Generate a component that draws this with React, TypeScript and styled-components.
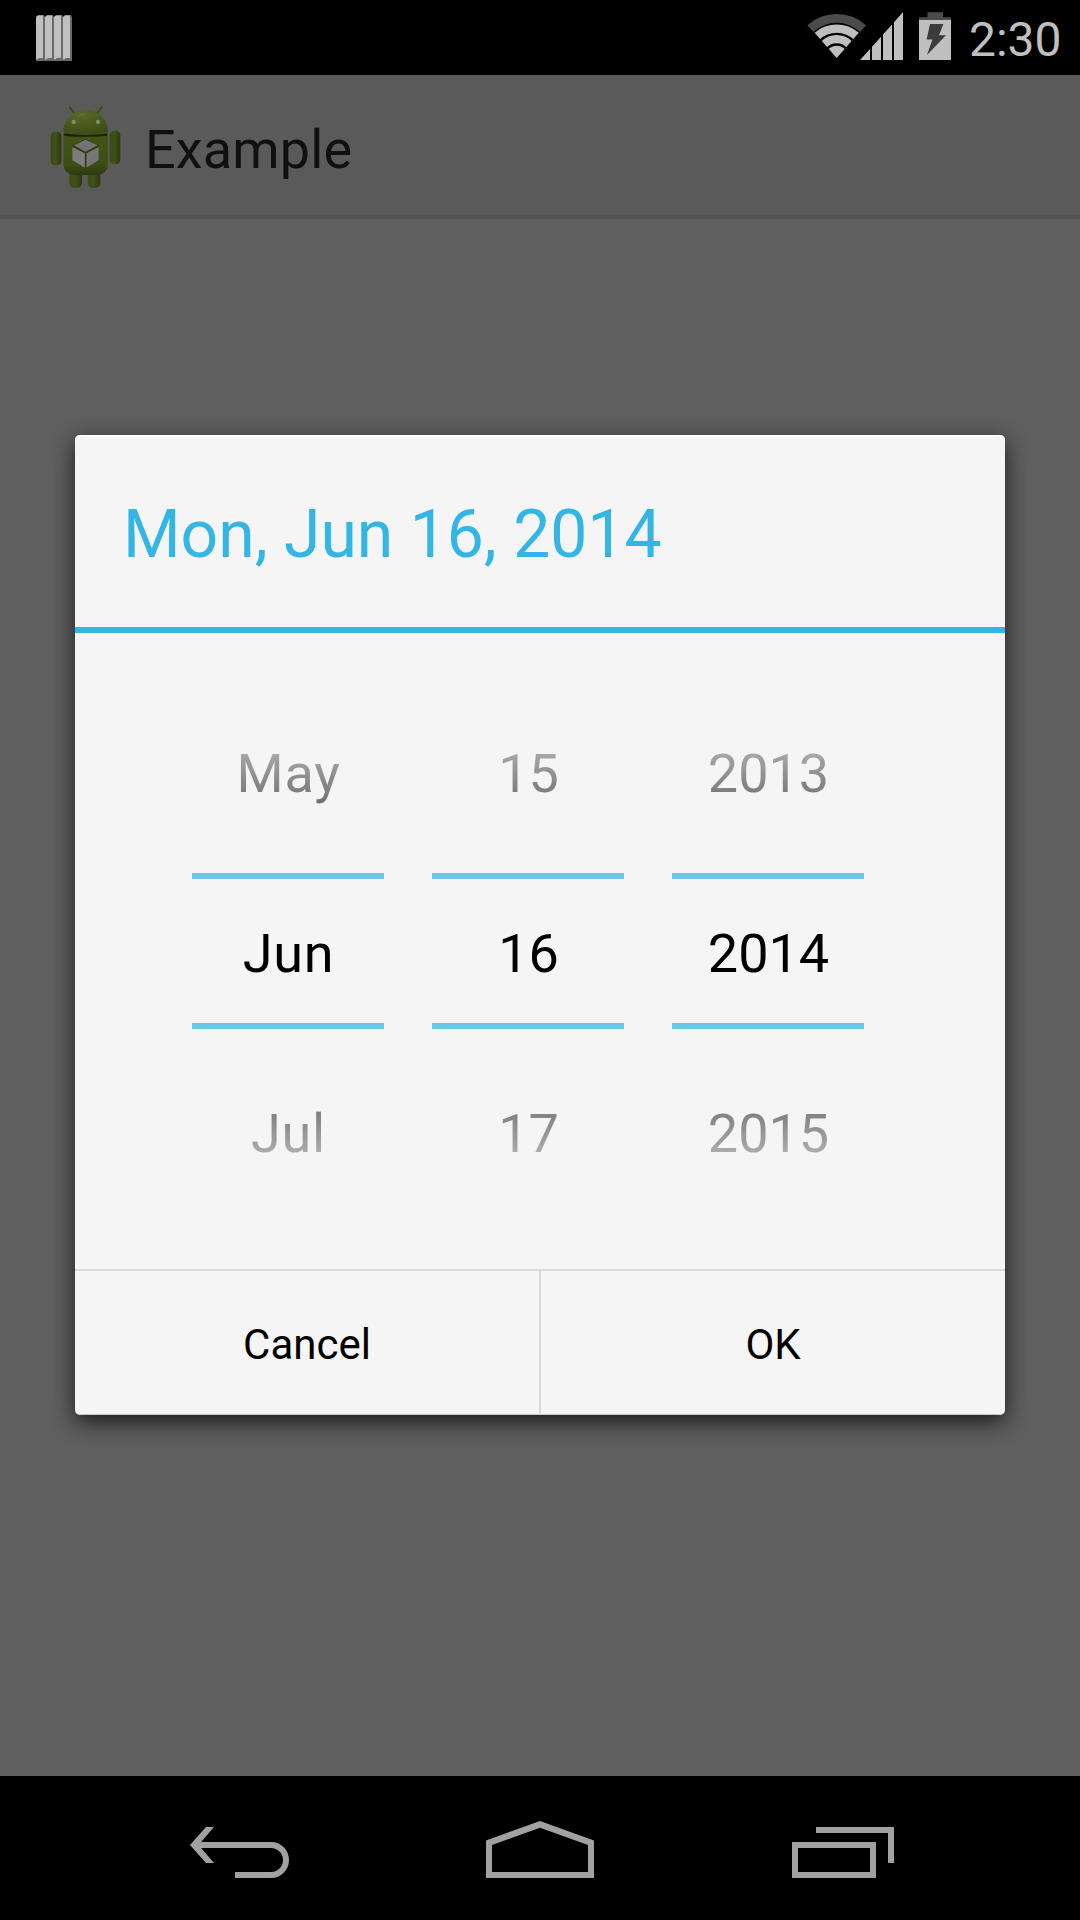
import React from "react";
import styled, { createGlobalStyle } from "styled-components";

const GlobalStyle = createGlobalStyle`
  html, body { margin: 0; padding: 0; background: #000; }
  * { box-sizing: border-box; }
`;

const Screen = styled.div`
  width: 1080px;
  height: 1920px;
  display: flex;
  flex-direction: column;
  overflow: hidden;
  background: #5f5f5f;
  font-family: Roboto, "Noto Sans", sans-serif;
  font-weight: 400;
`;

const StatusBar = styled.header`
  height: 75px;
  flex: none;
  display: flex;
  justify-content: space-between;
  align-items: flex-start;
  padding: 0 19px 0 36px;
  background: #000;
`;

const NotificationIcon = styled.svg`
  width: 36px;
  height: 46px;
  margin-top: 15px;
`;

const StatusIcons = styled.div`
  display: flex;
  align-items: flex-start;
`;

const StatusGlyph = styled.svg<{ $width: number; $gap?: number }>`
  width: ${(p) => p.$width}px;
  height: 75px;
  margin-right: ${(p) => p.$gap ?? 0}px;
  flex: none;
`;

const Clock = styled.span`
  width: 92px;
  color: #bfbfbf;
  font-size: 48px;
  line-height: 56px;
  padding-top: 12px;
  white-space: nowrap;
`;

const ActionBar = styled.div`
  height: 144px;
  flex: none;
  display: flex;
  align-items: flex-start;
  padding: 20px 0 0 40px;
  background: #5a5a5a;
  border-bottom: 4px solid #555;
`;

const AppIcon = styled.svg`
  width: 100px;
  height: 100px;
  flex: none;
`;

const AppTitle = styled.h1`
  margin: 23px 0 0 5px;
  color: #101010;
  font-size: 54px;
  font-weight: 400;
  line-height: 64px;
  letter-spacing: 0.15px;
`;

const Content = styled.main`
  flex: 1;
  display: flex;
  justify-content: center;
  align-items: flex-start;
  padding-top: 216px;
`;

const Dialog = styled.section`
  width: 930px;
  height: 980px;
  display: flex;
  flex-direction: column;
  background: #f5f5f5;
  border-radius: 5px;
  box-shadow:
    inset 0 2px 0 #fff,
    inset 0 -1px 0 #c4c8c8,
    0 7px 22px rgba(0, 0, 0, 0.72);
`;

const DialogHeader = styled.div`
  height: 198px;
  flex: none;
  padding: 62px 48px 0;
  border-bottom: 6px solid #33b5e5;
`;

const DialogTitle = styled.h2`
  margin: 0;
  color: #33b5e5;
  font-size: 66px;
  font-weight: 400;
  line-height: 76px;
  white-space: nowrap;
`;

const Pickers = styled.div`
  height: 636px;
  flex: none;
  display: flex;
  gap: 48px;
  padding: 48px 0 48px 117px;
`;

const Picker = styled.div`
  position: relative;
  width: 192px;
  height: 540px;
`;

const PickerValues = styled.div<{ $tracking: number }>`
  height: 540px;
  display: flex;
  flex-direction: column;
  letter-spacing: ${(p) => p.$tracking}px;
  mask-image: linear-gradient(to bottom, transparent 0, #000 228px, #000 312px, transparent 540px);
`;

const PickerValue = styled.div`
  height: 180px;
  padding-top: 5px;
  padding-left: 1px;
  color: #000;
  font-size: 54px;
  line-height: 176px;
  text-align: center;
`;

const SelectionFrame = styled.div`
  position: absolute;
  inset: 192px 0;
  border: solid #6bc6e9;
  border-width: 6px 0;
`;

const ButtonBar = styled.div`
  flex: 1;
  display: flex;
  border-top: 2px solid #dadada;
`;

const DialogButton = styled.button`
  flex: 1 1 0;
  margin: 0;
  padding: 3px 0 0;
  border: 0;
  background: transparent;
  color: #000;
  font: 400 42px Roboto, "Noto Sans", sans-serif;

  & + & {
    border-left: 2px solid #dadada;
    flex-basis: 2px;
  }
`;

const NavBar = styled.nav`
  height: 144px;
  flex: none;
  display: flex;
  justify-content: center;
  gap: 156px;
  background: #000;
`;

const NavIcon = styled.svg`
  width: 144px;
  height: 144px;
`;

const columns = [
  { values: ["May", "Jun", "Jul"], tracking: 0.7 },
  { values: ["15", "16", "17"], tracking: 0 },
  { values: ["2013", "2014", "2015"], tracking: 0 },
];

function BarsIcon() {
  return (
    <NotificationIcon viewBox="0 0 36 46">
      {[0, 9, 18, 27].map((x) => (
        <g key={x} transform={`translate(${x} 0)`}>
          <path d="M0 2L2 0H8L9 2V46H0Z" fill="#6a6868" />
          <path d="M0 2L2 0.6H7V43H3L1 44.5H0Z" fill="#bfbfbf" />
        </g>
      ))}
    </NotificationIcon>
  );
}

function WifiIcon() {
  return (
    <StatusGlyph $width={60} $gap={-7} viewBox="17 0 60 75">
      <path d="M46.7 58L17.4 25.2A43.6 43.6 0 0 1 76 25.2Z" fill="#4b4b4b" />
      <path d="M46.7 58L23.3 31.8A35 35 0 0 1 70.1 31.8Z" fill="#000" />
      <path d="M46.7 58L24.7 32.8A33 33 0 0 1 68.7 32.8Z" fill="#bfbfbf" />
      <path d="M30.6 40.3A23.4 23.4 0 0 1 62.8 40.3" fill="none" stroke="#000" strokeWidth="2.4" />
      <path d="M37.4 48.4A13 13 0 0 1 56 48.4" fill="none" stroke="#000" strokeWidth="2.6" />
    </StatusGlyph>
  );
}

function CellIcon() {
  return (
    <StatusGlyph $width={43} $gap={16} viewBox="70 0 43 75">
      <path
        d="M70 60L80 49V60ZM82 46.8L91 36.8V60H82ZM93 34.6L102 24.6V60H93ZM104 22.3L113 12V60H104Z"
        fill="#bfbfbf"
      />
    </StatusGlyph>
  );
}

function BatteryIcon() {
  return (
    <StatusGlyph $width={32} $gap={18} viewBox="129 0 32 75">
      <path d="M137.5 12.3H153V17.3H161V21H129V17.3H137.5Z" fill="#4b4b4b" />
      <path d="M129 20H161V60H129Z" fill="#bfbfbf" />
      <path d="M140 24H153.4L149 35.3H156L137 55L142.4 39.4H136.6Z" fill="#3c3c3c" />
    </StatusGlyph>
  );
}

function AndroidIcon() {
  return (
    <AppIcon viewBox="0 0 300 300">
      <defs>
        <linearGradient id="limb" x1="0" y1="0" x2="1" y2="0">
          <stop offset="0" stopColor="#394a14" />
          <stop offset="0.45" stopColor="#405216" />
          <stop offset="1" stopColor="#2b380f" />
        </linearGradient>
        <linearGradient id="torso" x1="0" y1="0" x2="0" y2="1">
          <stop offset="0" stopColor="#425416" />
          <stop offset="0.75" stopColor="#3d4e15" />
          <stop offset="1" stopColor="#2c390f" />
        </linearGradient>
        <radialGradient id="head" cx="0.4" cy="0.2" r="0.85">
          <stop offset="0" stopColor="#5b672c" />
          <stop offset="0.5" stopColor="#4b5b1e" />
          <stop offset="1" stopColor="#3b4b14" />
        </radialGradient>
      </defs>
      <path d="M90 37L103 54M185 37L172 54" stroke="#3b4818" strokeWidth="6" strokeLinecap="round" />
      <rect x="88" y="222" width="38" height="57" rx="15" fill="url(#limb)" />
      <rect x="143" y="222" width="38" height="57" rx="15" fill="url(#limb)" />
      <rect x="32" y="110" width="32" height="101" rx="13" fill="url(#limb)" />
      <rect x="209" y="107" width="32" height="101" rx="13" fill="url(#limb)" />
      <path d="M70 116H204V207Q202 239 169 240H105Q72 239 70 207Z" fill="url(#torso)" />
      <path d="M71 115Q137 125 203 115L201 122Q137 129 73 122Z" fill="#1a2208" />
      <path d="M70 110C70 72 101 44 137 44S204 72 204 110Q196 117 137 117T70 110Z" fill="url(#head)" />
      <path d="M110 62Q122 52 138 55Q133 64 112 65Z" fill="#746a3d" opacity="0.55" />
      <circle cx="101" cy="81" r="6.5" fill="#828770" />
      <circle cx="174" cy="81" r="6.5" fill="#828770" />
      <path d="M97 151L137 132L177 151V196L137 221L97 196Z" fill="#2f3d0e" />
      <path d="M101 151L137 134L173 151L137 170Z" fill="#737373" />
      <path d="M97 156L134.500 175V218L97 196Z" fill="#7d7d7d" />
      <path d="M176 156L139.500 175V218L176 196Z" fill="#777" />
    </AppIcon>
  );
}

export default function App() {
  return (
    <>
      <GlobalStyle />
      <Screen>
        <StatusBar>
          <BarsIcon />
          <StatusIcons>
            <WifiIcon />
            <CellIcon />
            <BatteryIcon />
            <Clock>2:30</Clock>
          </StatusIcons>
        </StatusBar>
        <ActionBar>
          <AndroidIcon />
          <AppTitle>Example</AppTitle>
        </ActionBar>
        <Content>
          <Dialog>
            <DialogHeader>
              <DialogTitle>Mon, Jun 16, 2014</DialogTitle>
            </DialogHeader>
            <Pickers>
              {columns.map(({ values, tracking }) => (
                <Picker key={values[1]}>
                  <PickerValues $tracking={tracking}>
                    {values.map((value) => (
                      <PickerValue key={value}>{value}</PickerValue>
                    ))}
                  </PickerValues>
                  <SelectionFrame />
                </Picker>
              ))}
            </Pickers>
            <ButtonBar>
              <DialogButton>Cancel</DialogButton>
              <DialogButton>OK</DialogButton>
            </ButtonBar>
          </Dialog>
        </Content>
        <NavBar>
          <NavIcon viewBox="168 1776 144 144">
            <path d="M198 1845H271A15 15 0 0 1 271 1875H235" fill="none" stroke="#a1a1a1" strokeWidth="6" />
            <path d="M190 1845L206 1827H214L198.500 1845L214 1863H206Z" fill="#a1a1a1" />
          </NavIcon>
          <NavIcon viewBox="468 1776 144 144">
            <path
              d="M486 1840.500L540 1821L594 1840.500V1878H486ZM492 1845V1872H588V1845L540 1827.800Z"
              fill="#a1a1a1"
              fillRule="evenodd"
            />
          </NavIcon>
          <NavIcon viewBox="768 1776 144 144">
            <path d="M795 1845H873V1875H795ZM816 1830H891V1863" fill="none" stroke="#a1a1a1" strokeWidth="6" />
          </NavIcon>
        </NavBar>
      </Screen>
    </>
  );
}
